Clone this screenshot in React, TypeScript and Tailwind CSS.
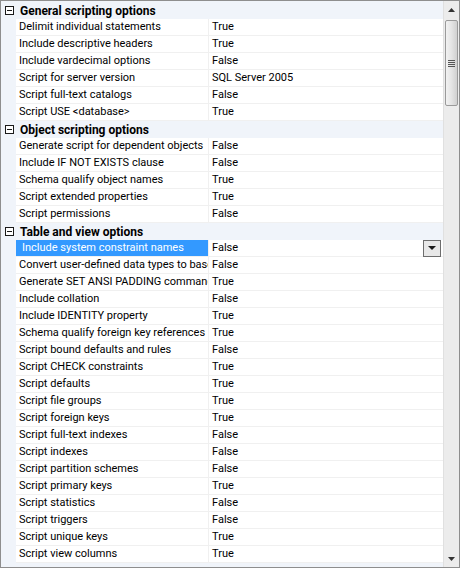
import React from 'react';

type Row = { label: string; value: string; selected?: boolean };
type Group = { title: string; rows: Row[] };

const groups: Group[] = [
  {
    title: 'General scripting options',
    rows: [
      { label: 'Delimit individual statements', value: 'True' },
      { label: 'Include descriptive headers', value: 'True' },
      { label: 'Include vardecimal options', value: 'False' },
      { label: 'Script for server version', value: 'SQL Server 2005' },
      { label: 'Script full-text catalogs', value: 'False' },
      { label: 'Script USE <database>', value: 'True' },
    ],
  },
  {
    title: 'Object scripting options',
    rows: [
      { label: 'Generate script for dependent objects', value: 'False' },
      { label: 'Include IF NOT EXISTS clause', value: 'False' },
      { label: 'Schema qualify object names', value: 'True' },
      { label: 'Script extended properties', value: 'True' },
      { label: 'Script permissions', value: 'False' },
    ],
  },
  {
    title: 'Table and view options',
    rows: [
      { label: 'Include system constraint names', value: 'False', selected: true },
      { label: 'Convert user-defined data types to base types', value: 'False' },
      { label: 'Generate SET ANSI PADDING commands', value: 'True' },
      { label: 'Include collation', value: 'False' },
      { label: 'Include IDENTITY property', value: 'True' },
      { label: 'Schema qualify foreign key references', value: 'True' },
      { label: 'Script bound defaults and rules', value: 'False' },
      { label: 'Script CHECK constraints', value: 'True' },
      { label: 'Script defaults', value: 'True' },
      { label: 'Script file groups', value: 'True' },
      { label: 'Script foreign keys', value: 'True' },
      { label: 'Script full-text indexes', value: 'False' },
      { label: 'Script indexes', value: 'False' },
      { label: 'Script partition schemes', value: 'False' },
      { label: 'Script primary keys', value: 'True' },
      { label: 'Script statistics', value: 'False' },
      { label: 'Script triggers', value: 'False' },
      { label: 'Script unique keys', value: 'True' },
      { label: 'Script view columns', value: 'True' },
    ],
  },
];

const MinusBox = () => (
  <svg width="9" height="9" viewBox="0 0 9 9" className="block">
    <rect x="0.5" y="0.5" width="8" height="8" fill="white" stroke="#1a1a1a" />
    <line x1="2" y1="4.5" x2="7" y2="4.5" stroke="#1a1a1a" />
  </svg>
);

const GroupHeader = ({ title }: { title: string }) => (
  <div className="h-[17px] flex items-center bg-[#f0f4fa]">
    <div className="w-[15px] flex justify-center pl-[1px]">
      <MinusBox />
    </div>
    <span className="pl-[4px] font-bold text-[12px] text-black">{title}</span>
  </div>
);

const PropRow = ({ row }: { row: Row }) => (
  <div className="h-[17px] flex bg-[#f0f4fa]">
    <div className="w-[15px]" />
    <div
      className={`w-[192px] flex items-center overflow-hidden whitespace-nowrap border-b border-[#f0f0f0] pt-[1px] ${
        row.selected ? 'bg-[#3399ff] text-white pl-[6px]' : 'bg-white text-black pl-[3px]'
      }`}
    >
      {row.label}
    </div>
    <div className="w-[1px] bg-[#f0f0f0]" />
    <div className="flex-1 flex items-center justify-between bg-white border-b border-[#f0f0f0] pl-[3px] pr-[2px]">
      <span className="pt-[1px]">{row.value}</span>
      {row.selected && (
        <div className="w-[18px] h-[17px] border border-[#6d6d6d] bg-[#e8e8e8] flex items-center justify-center">
          <svg width="8" height="4" viewBox="0 0 8 4">
            <path d="M0 0 H8 L4 4 Z" fill="#1a1a1a" />
          </svg>
        </div>
      )}
    </div>
  </div>
);

const ScrollBar = () => (
  <div className="w-[16px] flex flex-col bg-[#ececec] border-l border-[#e0e0e0]">
    <div className="h-[17px] flex items-center justify-center">
      <svg width="7" height="4" viewBox="0 0 7 4">
        <path d="M0 4 H7 L3.5 0 Z" fill="#333" />
      </svg>
    </div>
    <div className="mx-[1px] mt-[2px] h-[86px] rounded-[2px] border border-[#9a9a9a] bg-gradient-to-r from-[#f2f2f2] via-[#e4e4e4] to-[#d0d0d0] flex items-center justify-center">
      <div className="flex flex-col gap-[1px]">
        <div className="w-[7px] h-[1px] bg-[#555]" />
        <div className="w-[7px] h-[1px] bg-[#555]" />
        <div className="w-[7px] h-[1px] bg-[#555]" />
        <div className="w-[7px] h-[1px] bg-[#555]" />
      </div>
    </div>
    <div className="flex-1" />
    <div className="h-[17px] flex items-center justify-center">
      <svg width="7" height="4" viewBox="0 0 7 4">
        <path d="M0 0 H7 L3.5 4 Z" fill="#333" />
      </svg>
    </div>
  </div>
);

export default function App() {
  return (
    <div
      className="w-[460px] h-[569px] bg-white text-[11px] text-black"
      style={{ fontFamily: 'Tahoma, Roboto, "Liberation Sans", sans-serif' }}
    >
      <div className="w-[460px] h-[568px] border border-[#8e8e8e] flex overflow-hidden">
        <div className="flex-1 flex flex-col bg-[#f0f4fa] overflow-hidden pt-[1px]">
          {groups.map((g) => (
            <div key={g.title}>
              <GroupHeader title={g.title} />
              {g.rows.map((r) => (
                <PropRow key={r.label} row={r} />
              ))}
            </div>
          ))}
        </div>
        <ScrollBar />
      </div>
    </div>
  );
}
